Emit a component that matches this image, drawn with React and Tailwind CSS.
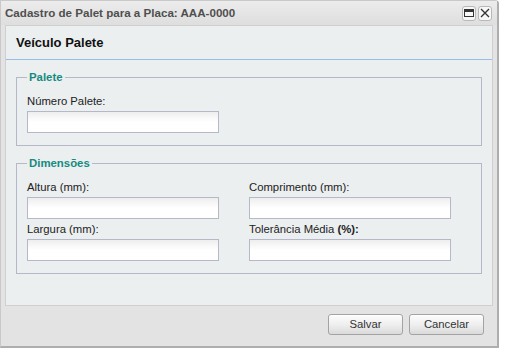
import React from 'react';

function Field({ label, width }) {
  return (
    <div className="flex flex-col">
      <label className="h-4 leading-4 text-[11.3px] text-[#222]">{label}</label>
      <input
        type="text"
        className="mt-[2px] h-[22px] border border-[#b5b8c8] bg-gradient-to-b from-[#eeeeee] via-white to-white outline-none"
        style={{ width }}
      />
    </div>
  );
}

function Btn({ children }) {
  return (
    <button className="h-[21px] w-[75px] rounded-[3px] border border-[#a3a3a3] bg-gradient-to-b from-[#fdfdfd] via-[#efefef] to-[#dadada] text-[11.3px] text-[#333] shadow-[inset_0_1px_0_#fff]">
      {children}
    </button>
  );
}

export default function App() {
  return (
    <div className="bg-white w-[510px] h-[359px]" style={{ fontFamily: '"Liberation Sans", Arial, sans-serif' }}>
      <div className="w-[499px] h-[348px] flex flex-col bg-[#e3e3e3] border-l border-t border-[#c9c9c9] border-r-2 border-b-2 border-r-[#aeaeae] border-b-[#aeaeae] rounded-tr-[4px]">
        {/* title bar */}
        <div className="h-[24px] flex items-center justify-between pl-[4px] pr-[5px] bg-gradient-to-b from-[#ececec] to-[#dedede]">
          <span className="text-[11.6px] font-bold text-[#4f4f4f]">Cadastro de Palet para a Placa: AAA-0000</span>
          <div className="flex gap-[2px]">
            <div className="w-[14px] h-[15px] rounded-[3px] border border-[#b8b8b8] bg-[#f7f7f7] flex items-center justify-center">
              <div className="w-[10px] h-[8px] border border-[#333] border-t-[3px]" />
            </div>
            <div className="w-[14px] h-[15px] rounded-[3px] border border-[#b8b8b8] bg-[#f7f7f7] flex items-center justify-center">
              <svg width="10" height="10" viewBox="0 0 10 10">
                <path d="M1 1 L9 9 M9 1 L1 9" stroke="#333" strokeWidth="1.3" />
              </svg>
            </div>
          </div>
        </div>

        {/* panel */}
        <div className="mx-[4px] h-[281px] border border-[#cfcfcf] bg-[#ebeff0] px-[10px]">
          <div className="-mx-[10px] h-[34px] border-b border-[#99bbe8] flex items-center pl-[10px]">
            <span className="text-[13px] font-bold text-[#111]">Veículo Palete</span>
          </div>

          <fieldset className="mt-[10px] border border-[#b5b8c8] px-[10px] pb-[12px]">
            <legend className="px-[2px] h-[14px] leading-[14px] text-[11.4px] font-bold text-[#178a80]">Palete</legend>
            <div className="mt-[9px]">
              <Field label="Número Palete:" width={192} />
            </div>
          </fieldset>

          <fieldset className="mt-[10px] border border-[#b5b8c8] px-[10px] pb-[12px]">
            <legend className="px-[2px] h-[14px] leading-[14px] text-[11.4px] font-bold text-[#178a80]">Dimensões</legend>
            <div className="mt-[9px] grid grid-cols-[192px_202px] gap-x-[30px] gap-y-[2px]">
              <Field label="Altura (mm):" width={192} />
              <Field label="Comprimento (mm):" width={202} />
              <Field label="Largura (mm):" width={192} />
              <Field
                label={
                  <>
                    Tolerância Média <b>(%):</b>
                  </>
                }
                width={202}
              />
            </div>
          </fieldset>
        </div>

        {/* footer */}
        <div className="flex justify-end gap-[6px] pr-[13px] pt-[8px]">
          <Btn>Salvar</Btn>
          <Btn>Cancelar</Btn>
        </div>
      </div>
    </div>
  );
}
